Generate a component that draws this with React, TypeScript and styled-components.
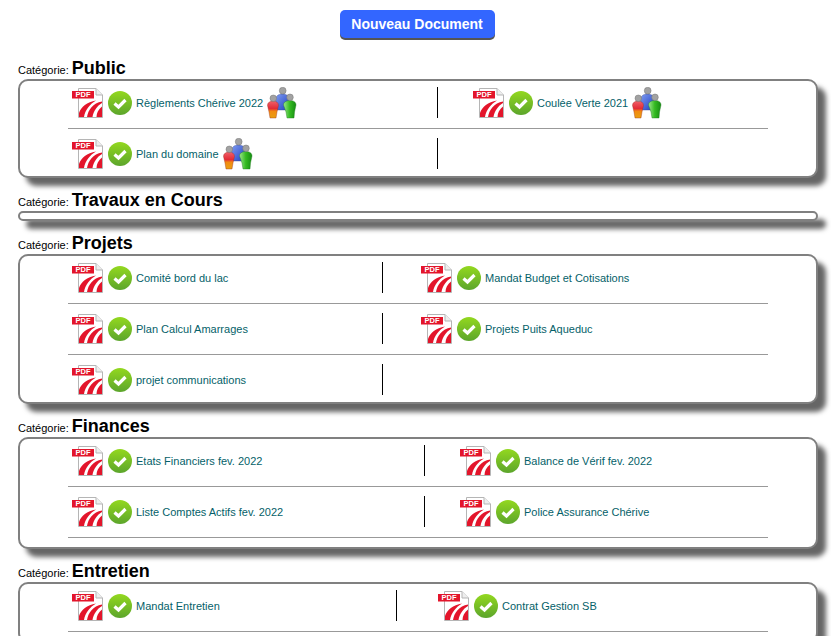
import React, { FC, useId } from 'react';
import styled, { createGlobalStyle } from 'styled-components';

const Global = createGlobalStyle`
  html, body {
    margin: 0;
    height: 100%;
    overflow: hidden;
    background: #fff;
    font-family: "Liberation Sans", Arial, sans-serif;
  }
`;

const Page = styled.div`
  padding: 10px 13px 0 18px;
`;

const Toolbar = styled.div`
  display: flex;
  justify-content: center;
  padding-right: 2px;
  margin-bottom: 20px;
`;

const NewButton = styled.button`
  width: 155px;
  height: 28px;
  padding: 0;
  border: 0;
  border-radius: 5px;
  background-color: #3366ff;
  box-shadow: 0 2px 0 #555;
  color: #fff;
  font-family: "Liberation Sans", Arial, sans-serif;
  font-size: 14px;
  font-weight: 700;
`;

const Section = styled.section`
  margin-bottom: 12px;
`;

const Heading = styled.div`
  display: flex;
  align-items: baseline;
  height: 21px;
  color: #000;
`;

const HeadingLabel = styled.span`
  font-size: 11px;
  margin-right: 3px;
`;

const HeadingTitle = styled.span`
  font-size: 18px;
  font-weight: 700;
`;

const Panel = styled.div<{ $trail?: boolean }>`
  box-sizing: border-box;
  width: 800px;
  min-height: 10px;
  padding-bottom: ${(props) => (props.$trail ? '9px' : '0')};
  border: 2px solid #808080;
  border-radius: 10px;
  background: #fff;
  box-shadow: 8px 8px 5px #666;
`;

const Rows = styled.div`
  width: 700px;
  margin-left: 48px;
`;

const Row = styled.div<{ $split: number; $ruled: boolean }>`
  display: grid;
  grid-template-columns: ${(props) => props.$split}px 1fr;
  padding: 10px 0 ${(props) => (props.$ruled ? '10px' : '7px')};
  border-bottom: ${(props) => (props.$ruled ? '1px solid #999' : '0')};
  &:first-child {
    padding-top: 7px;
  }
`;

const Cell = styled.div<{ $offset?: number }>`
  display: flex;
  align-items: center;
  height: 30px;
  padding-left: ${(props) => props.$offset ?? 3}px;
`;

const RightCell = styled(Cell)`
  border-left: 1px solid #000;
  height: 31px;
  margin-top: -1px;
`;

const DocName = styled.a`
  margin-right: 4px;
  color: #055f69;
  font-size: 11px;
  white-space: nowrap;
`;

const PdfSvg = styled.svg`
  flex: none;
  width: 32px;
  height: 32px;
  margin-right: 5px;
`;

const CheckSvg = styled.svg`
  flex: none;
  width: 24px;
  height: 24px;
  margin-right: 4px;
`;

const PeopleSvg = styled.svg`
  flex: none;
  width: 30px;
  height: 32px;
`;

const PdfIcon: FC = () => (
  <PdfSvg viewBox="0 0 32 32">
    <path d="M7.5 1.5H25L31.5 8V30.5H7.5Z" fill="#fff" stroke="#b5b5b5" />
    <path d="M25 1.5V8H31.5" fill="#eee" stroke="#b5b5b5" />
    <path d="M8 30V26C10 20 16 15 25 13.5C19 17 14 23 13 30Z" fill="#e3152b" />
    <path d="M16 30C17 23 22 16 31 14.5V16C26 19 22.5 24 21.5 30Z" fill="#e3152b" />
    <path d="M25.5 30C25.5 26 27.5 22 31 19.5V30Z" fill="#e3152b" />
    <rect x="1" y="4" width="22" height="7.5" fill="#e3152b" />
    <text x="12" y="10.2" fontSize="7.5" fontWeight="700" fill="#fff" textAnchor="middle" fontFamily="Liberation Sans">
      PDF
    </text>
  </PdfSvg>
);

const CheckIcon: FC = () => {
  const id = useId();
  return (
    <CheckSvg viewBox="0 0 24 24">
      <defs>
        <linearGradient id={id} x1="0" y1="0" x2="0" y2="1">
          <stop offset="0" stopColor="#93d81f" />
          <stop offset="1" stopColor="#5ca52c" />
        </linearGradient>
      </defs>
      <circle cx="12" cy="12" r="12" fill={`url(#${id})`} />
      <path d="M6.5 12.5L10.5 16L17.5 9" fill="none" stroke="#fff" strokeWidth="3.2" />
    </CheckSvg>
  );
};

const PeopleIcon: FC = () => {
  const id = useId();
  return (
    <PeopleSvg viewBox="0 0 30 32">
      <defs>
        <linearGradient id={`${id}r`} x1="0" y1="0" x2="0" y2="1">
          <stop offset="0" stopColor="#f0606a" />
          <stop offset="0.45" stopColor="#e22b35" />
          <stop offset="0.6" stopColor="#f28a12" />
          <stop offset="1" stopColor="#e8a010" />
        </linearGradient>
        <linearGradient id={`${id}b`} x1="0" y1="0" x2="1" y2="1">
          <stop offset="0" stopColor="#7f9cf2" />
          <stop offset="1" stopColor="#1f3fc0" />
        </linearGradient>
        <linearGradient id={`${id}g`} x1="0" y1="0" x2="1" y2="0">
          <stop offset="0" stopColor="#9ce68c" />
          <stop offset="0.5" stopColor="#35bb22" />
          <stop offset="1" stopColor="#168c12" />
        </linearGradient>
      </defs>
      <path d="M8.5 13C8.5 9 11.5 7 15.5 7C19.5 7 22 9 22 13L21 23H10Z" fill={`url(#${id}b)`} stroke="#3a4a90" strokeWidth="0.4" />
      <circle cx="15.7" cy="3.7" r="3.4" fill="#a2a2a2" stroke="#777" strokeWidth="0.5" />
      <path d="M0.5 18.5C0.5 15.5 3 14 6 14C9 14 11.5 15.5 11.5 18.5L10 25L9 31H3L2 25Z" fill={`url(#${id}r)`} stroke="#a03020" strokeWidth="0.4" />
      <circle cx="6.3" cy="11.3" r="3.3" fill="#a2a2a2" stroke="#777" strokeWidth="0.5" />
      <path d="M16.5 18C16.5 15 19.5 13.5 23 13.5C26.5 13.5 29 15 29 18L27.5 25L27 31H20L19 25Z" fill={`url(#${id}g)`} stroke="#1c7a18" strokeWidth="0.4" />
      <circle cx="23" cy="10.3" r="3.3" fill="#a2a2a2" stroke="#777" strokeWidth="0.5" />
    </PeopleSvg>
  );
};

interface Doc {
  name: string;
  shared?: boolean;
}

const Item: FC<{ doc: Doc }> = ({ doc }) => (
  <>
    <PdfIcon />
    <CheckIcon />
    <DocName>{doc.name}</DocName>
    {doc.shared && <PeopleIcon />}
  </>
);

interface Category {
  title: string;
  split: number;
  offset: number;
  trail?: boolean;
  rows: { left: Doc; right?: Doc; ruled: boolean }[];
}

const categories: Category[] = [
  {
    title: 'Public',
    split: 369,
    offset: 34,
    rows: [
      { left: { name: 'Règlements Chérive 2022', shared: true }, right: { name: 'Coulée Verte 2021', shared: true }, ruled: true },
      { left: { name: 'Plan du domaine', shared: true }, ruled: false },
    ],
  },
  { title: 'Travaux en Cours', split: 0, offset: 0, rows: [] },
  {
    title: 'Projets',
    split: 314,
    offset: 37,
    rows: [
      { left: { name: 'Comité bord du lac' }, right: { name: 'Mandat Budget et Cotisations' }, ruled: true },
      { left: { name: 'Plan Calcul Amarrages' }, right: { name: 'Projets Puits Aqueduc' }, ruled: true },
      { left: { name: 'projet communications' }, ruled: false },
    ],
  },
  {
    title: 'Finances',
    split: 356,
    offset: 34,
    trail: true,
    rows: [
      { left: { name: 'Etats Financiers fev. 2022' }, right: { name: 'Balance de Vérif fev. 2022' }, ruled: true },
      { left: { name: 'Liste Comptes Actifs fev. 2022' }, right: { name: 'Police Assurance Chérive' }, ruled: true },
    ],
  },
  {
    title: 'Entretien',
    split: 328,
    offset: 40,
    trail: true,
    rows: [{ left: { name: 'Mandat Entretien' }, right: { name: 'Contrat Gestion SB' }, ruled: true }],
  },
];

const App: FC = () => (
  <Page>
    <Global />
    <Toolbar>
      <NewButton>Nouveau Document</NewButton>
    </Toolbar>
    {categories.map((cat) => (
      <Section key={cat.title}>
        <Heading>
          <HeadingLabel>Catégorie:</HeadingLabel>
          <HeadingTitle>{cat.title}</HeadingTitle>
        </Heading>
        <Panel $trail={cat.trail}>
          {cat.rows.length > 0 && (
            <Rows>
              {cat.rows.map((row) => (
                <Row key={row.left.name} $split={cat.split} $ruled={row.ruled}>
                  <Cell>
                    <Item doc={row.left} />
                  </Cell>
                  <RightCell $offset={cat.offset}>{row.right && <Item doc={row.right} />}</RightCell>
                </Row>
              ))}
            </Rows>
          )}
        </Panel>
      </Section>
    ))}
  </Page>
);

export default App;
